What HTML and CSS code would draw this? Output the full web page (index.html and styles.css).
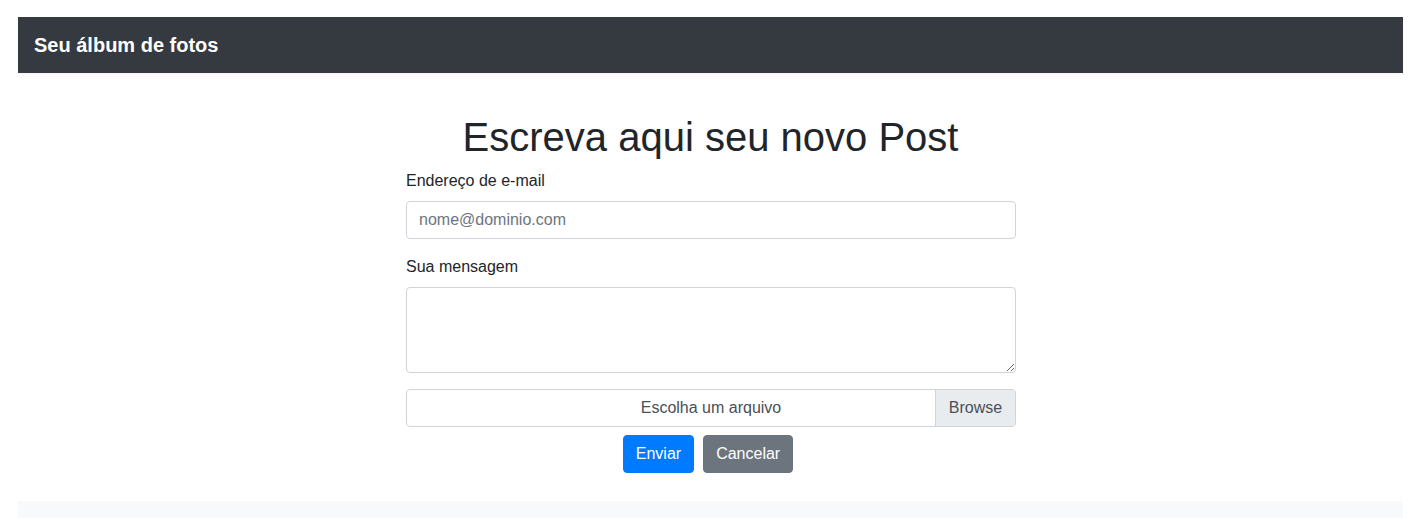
FILE: index.html
```html
<!DOCTYPE html>
<html lang="pt-BR">
<head>
<meta charset="utf-8">
<title>Seu álbum de fotos</title>
<link rel="stylesheet" href="styles.css">
</head>
<body>
<div class="page">
  <nav class="navbar">
    <a class="brand" href="#">Seu álbum de fotos</a>
  </nav>
  <main class="main">
    <h1 class="title">Escreva aqui seu novo Post</h1>
    <form class="post-form">
      <div class="form-group">
        <label class="label" for="email">Endereço de e-mail</label>
        <input class="control" id="email" type="email" placeholder="nome@dominio.com">
      </div>
      <div class="form-group">
        <label class="label" for="msg">Sua mensagem</label>
        <textarea class="control textarea" id="msg" rows="3"></textarea>
      </div>
      <div class="file">
        <span class="file-label">Escolha um arquivo</span>
        <span class="file-browse">Browse</span>
      </div>
      <div class="actions">
        <button type="button" class="btn btn-primary">Enviar</button>
        <button type="button" class="btn btn-secondary">Cancelar</button>
      </div>
    </form>
  </main>
  <footer class="footer"></footer>
</div>
</body>
</html>
```
FILE: styles.css
```css
* { box-sizing: border-box; }
html, body { margin: 0; padding: 0; }
body {
  font-family: "Liberation Sans", Arial, sans-serif;
  font-size: 16px;
  line-height: 1.5;
  color: #212529;
  background: #fff;
}
.page {
  padding: 17px 20px 0 18px;
}
.navbar {
  height: 56px;
  background: #343a40;
  display: flex;
  align-items: center;
  padding: 0 16px;
  box-shadow: 0 2px 3px rgba(0,0,0,.04);
}
.brand {
  color: #fff;
  font-size: 20px;
  font-weight: bold;
  text-decoration: none;
  line-height: 30px;
}
.main {
  padding-top: 40px;
  display: flex;
  flex-direction: column;
  align-items: center;
  padding-bottom: 28px;
}
.title {
  margin: 0 0 8px;
  font-size: 40px;
  font-weight: 500;
  line-height: 48px;
  text-align: center;
  color: #212529;
}
.post-form {
  width: 610px;
  margin-left: 1px;
}
.form-group { margin-bottom: 16px; }
.label {
  display: block;
  margin-bottom: 8px;
  line-height: 24px;
}
.control {
  display: block;
  width: 100%;
  height: 38px;
  padding: 6px 12px;
  font-family: inherit;
  font-size: 16px;
  line-height: 24px;
  color: #495057;
  background: #fff;
  border: 1px solid #ced4da;
  border-radius: 4px;
  outline: none;
}
.control::placeholder { color: #6c757d; opacity: 1; }
.textarea {
  height: 86px;
  resize: vertical;
}
.file {
  display: flex;
  height: 38px;
  border: 1px solid #ced4da;
  border-radius: 4px;
  overflow: hidden;
  color: #495057;
}
.file-label {
  flex: 1;
  text-align: center;
  line-height: 36px;
  padding-left: 80px;
}
.file-browse {
  width: 80px;
  text-align: center;
  background: #e9ecef;
  border-left: 1px solid #ced4da;
  line-height: 36px;
}
.actions {
  margin-top: 8px;
  display: flex;
  justify-content: center;
  gap: 9px;
  margin-left: -6px;
}
.btn {
  height: 38px;
  padding: 6px 12px;
  font-family: inherit;
  font-size: 16px;
  line-height: 24px;
  border: 1px solid transparent;
  border-radius: 4px;
  color: #fff;
  cursor: pointer;
}
.btn-primary { background: #007bff; border-color: #007bff; }
.btn-secondary { background: #6c757d; border-color: #6c757d; }
.footer {
  height: 17px;
  background: #f8f9fa;
}
```
